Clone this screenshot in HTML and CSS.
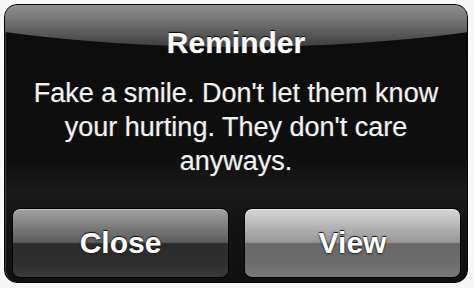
FILE: index.html
```html
<!DOCTYPE html>
<html>
<head>
<meta charset="utf-8">
<link rel="stylesheet" href="styles.css">
</head>
<body>
<div class="alert">
  <div class="gloss"></div>
  <h1 class="title">Reminder</h1>
  <p class="message">Fake a smile. Don't let them know<br>your hurting. They don't care<br>anyways.</p>
  <div class="actions">
    <button class="btn btn-close">Close</button>
    <button class="btn btn-view">View</button>
  </div>
</div>
</body>
</html>
```

FILE: styles.css
```css
html, body {
  margin: 0;
  background: #f7f7f7;
}
body {
  padding: 4px 6px 5px 4px;
  font-family: "Liberation Sans", Arial, sans-serif;
}
.alert {
  position: relative;
  overflow: hidden;
  width: 464px;
  height: 279px;
  box-sizing: border-box;
  border-radius: 13px;
  border: 1px solid #050505;
  background: linear-gradient(#0c0c0c 0%, #0f0f0f 55%, #1a1a1a 68%, #131313 80%, #101010 100%);
  box-shadow: inset 1px 0 0 #3a3a3a;
  display: flex;
  flex-direction: column;
  align-items: center;
}
.gloss {
  position: absolute;
  left: -268px;
  top: -220px;
  width: 1000px;
  height: 262px;
  border-radius: 50%;
  background: linear-gradient(#9a9a9a 0px, #8e8e8e 220px, #7a7a7a 232px, #5a5a5a 248px, #3c3c3c 262px);
}
.title {
  position: relative;
  margin: 20px 0 0;
  font-size: 30px;
  line-height: 36px;
  font-weight: bold;
  color: #fafafa;
  text-shadow: 0 -1px 1px #000, 0 0 1px #fff;
}
.message {
  position: relative;
  margin: 15px 0 0;
  font-size: 27px;
  line-height: 34px;
  color: #f2f2f2;
  text-align: center;
  text-shadow: 0 -1px 1px #000, 0 0 1px #ddd;
}
.actions {
  position: relative;
  margin-top: auto;
  align-self: stretch;
  display: flex;
  gap: 15px;
  padding: 0 6px 4px 7px;
}
.btn {
  flex: 1;
  height: 70px;
  border-radius: 8px;
  border: 1px solid #050505;
  font-family: "Liberation Sans", Arial, sans-serif;
  font-size: 30px;
  font-weight: bold;
  color: #ffffff;
  text-shadow: 0 -1px 1px #111, 0 1px 2px #222;
  padding: 0;
}
.btn-close {
  background: linear-gradient(#a2a2a2 0%, #858585 20%, #5c5c5c 49%, #2c2c2c 51%, #2e2e2e 80%, #3a3a3a 100%);
  box-shadow: inset 0 1px 0 #bdbdbd;
}
.btn-view {
  background: linear-gradient(#d6d6d6 0%, #bcbcbc 20%, #969696 49%, #686868 51%, #6c6c6c 80%, #7a7a7a 100%);
  box-shadow: inset 0 1px 0 #e6e6e6;
}
```
